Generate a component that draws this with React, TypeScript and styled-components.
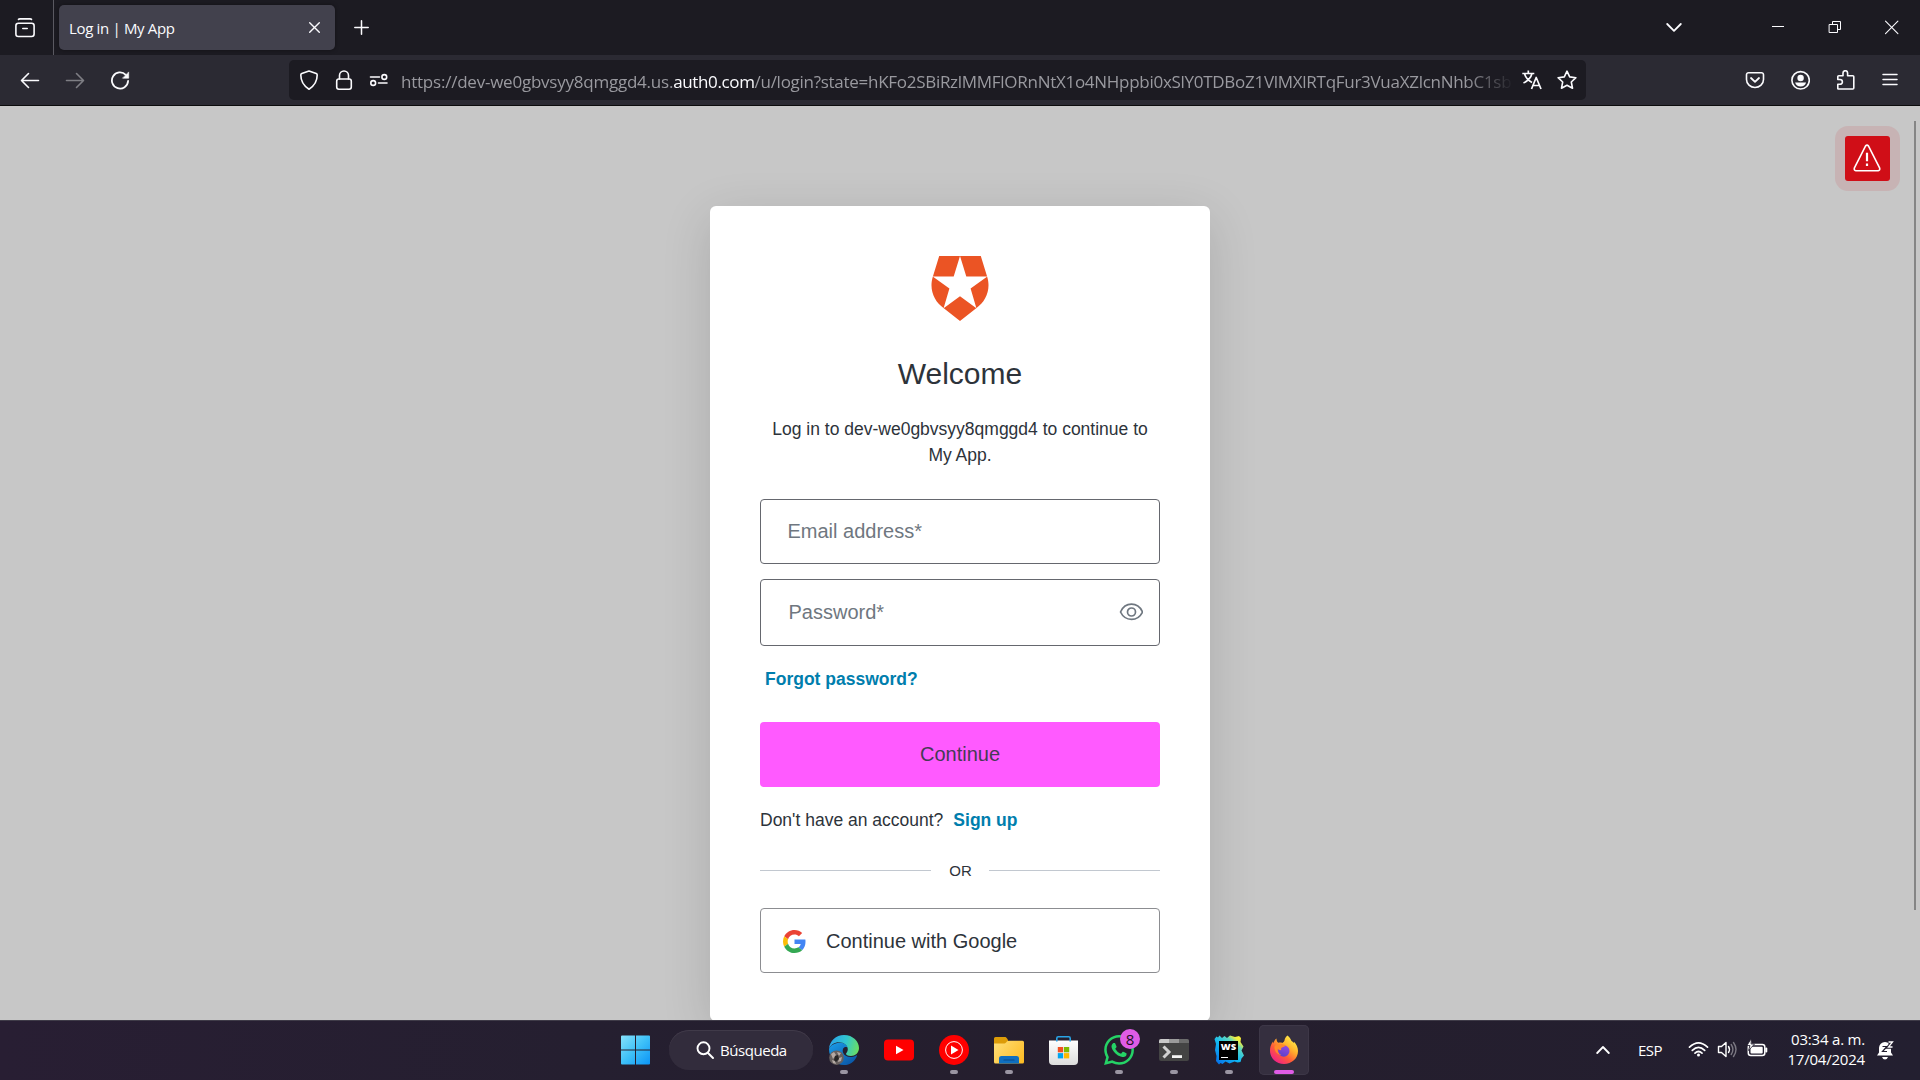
import React from "react";
import styled, { createGlobalStyle } from "styled-components";

const ui = `"Open Sans", "Noto Sans", sans-serif`;
const page = `"Liberation Sans", Arial, sans-serif`;

const GlobalStyle = createGlobalStyle`
  *, *::before, *::after { box-sizing: border-box; }
  html, body { margin: 0; padding: 0; overflow: hidden; }
  svg { display: block; flex: none; }
  button { font: inherit; padding: 0; margin: 0; }
`;

const Screen = styled.div`
  display: flex;
  flex-direction: column;
  width: 1920px;
  height: 1080px;
  overflow: hidden;
  font-family: ${ui};
`;

/* ---------- Browser chrome ---------- */

const TabStrip = styled.header`
  display: flex;
  align-items: center;
  height: 55px;
  background: #1c1b22;
  color: #fbfbfe;
`;

const ViewSlot = styled.div`
  display: flex;
  align-items: center;
  height: 55px;
  width: 54px;
  padding-left: 15px;
  border-right: 1px solid #5a5961;
`;

const Tab = styled.div`
  display: flex;
  align-items: center;
  justify-content: space-between;
  width: 276px;
  height: 45px;
  margin-left: 5px;
  padding: 0 14px 0 10px;
  border-radius: 5px;
  background: #42414d;
  box-shadow: 0 0 4px rgba(0, 0, 0, 0.4);
  font-size: 15px;
  letter-spacing: -0.33px;
  line-height: 20px;
`;

const NewTab = styled.div`
  margin-left: 19px;
`;

const WindowControls = styled.div`
  display: flex;
  align-items: center;
  gap: 41px;
  margin-left: auto;
  padding-right: 20px;
`;

const TabsMenu = styled.div`
  margin-right: 46px;
`;

const Toolbar = styled.nav`
  display: flex;
  align-items: center;
  height: 51px;
  background: #2b2a33;
  border-bottom: 1px solid #0c0c0d;
  color: #fbfbfe;
`;

const NavButtons = styled.div`
  display: flex;
  gap: 25px;
  width: 289px;
  padding-left: 20px;
`;

const Faded = styled.span`
  opacity: 0.4;
`;

const UrlBar = styled.div`
  display: flex;
  align-items: center;
  width: 1297px;
  height: 40px;
  padding-left: 10px;
  border-radius: 5px;
  background: #1c1b22;
`;

const UrlIcons = styled.div`
  display: flex;
  gap: 15px;
  width: 102px;
`;

const UrlText = styled.div`
  width: 1113px;
  overflow: hidden;
  white-space: nowrap;
  font-size: 17px;
  line-height: 24px;
  letter-spacing: -0.23px;
  padding-top: 4px;
  color: #99999f;
  mask-image: linear-gradient(to right, #000 1065px, transparent 1113px);
`;

const Host = styled.span`
  color: #fbfbfe;
  letter-spacing: -0.36px;
`;

const Path = styled.span`
  letter-spacing: -0.28px;
`;

const UrlActions = styled.div`
  display: flex;
  gap: 15px;
  margin-left: 8px;
`;

const ToolbarActions = styled.div`
  display: flex;
  gap: 25px;
  margin-left: auto;
  padding-right: 20px;
`;

/* ---------- Page ---------- */

const Viewport = styled.main`
  position: relative;
  display: flex;
  justify-content: center;
  align-items: flex-start;
  height: 914px;
  padding-top: 100px;
  overflow: hidden;
  background: #c7c7c7;
  font-family: ${page};
`;

const Card = styled.section`
  display: flex;
  flex-direction: column;
  width: 500px;
  height: 815px;
  padding: 50px 50px 0;
  border-radius: 6px;
  background: #fff;
  box-shadow: 0 12px 50px rgba(0, 0, 0, 0.14);
  color: #2d333a;
`;

const Brand = styled.div`
  display: flex;
  justify-content: center;
  height: 65px;
`;

const Title = styled.h1`
  margin: 35px 0 24px;
  font-size: 30px;
  line-height: 36px;
  font-weight: 400;
  text-align: center;
`;

const Intro = styled.p`
  margin: 0 0 31px;
  font-size: 17.5px;
  line-height: 26px;
  text-align: center;
`;

const Field = styled.div<{ $tall?: boolean }>`
  display: flex;
  align-items: center;
  justify-content: space-between;
  height: ${(p) => (p.$tall ? 67 : 65)}px;
  padding: 0 16px 2px ${(p) => (p.$tall ? 27.5 : 26.5)}px;
  margin-bottom: ${(p) => (p.$tall ? 20 : 15)}px;
  border: 1px solid #65676e;
  border-radius: 4px;
  color: #6f7780;
  font-size: 20px;
  line-height: 24px;
`;

const Link = styled.a`
  color: #007ead;
  font-weight: 700;
`;

const ForgotRow = styled.div`
  padding-left: 5px;
  margin-bottom: 30px;
  font-size: 17.5px;
  line-height: 26px;
`;

const Primary = styled.button`
  height: 65px;
  padding-bottom: 2px;
  border: 0;
  border-radius: 4px;
  background: #ff5aff;
  color: #463a55;
  font-size: 20px;
  line-height: 24px;
`;

const SignupRow = styled.div`
  display: flex;
  gap: 10px;
  margin: 20px 0 27px;
  font-size: 17.5px;
  line-height: 26px;
`;

const Divider = styled.div`
  display: flex;
  align-items: center;
  height: 20px;
  margin-bottom: 28px;
  font-size: 15px;
  line-height: 20px;
  text-align: center;
`;

const Rule = styled.span`
  flex: 1;
  height: 1px;
  background: #c2c8d0;
`;

const OrText = styled.span`
  width: 58px;
  padding: 2px 0 0 1px;
`;

const Social = styled.button`
  display: flex;
  align-items: center;
  gap: 20px;
  height: 65px;
  padding-left: 22px;
  border: 1px solid #8c8d91;
  border-radius: 4px;
  background: #fff;
  color: #2d333a;
  font-size: 20px;
  line-height: 24px;
`;

const AlertHalo = styled.div`
  position: absolute;
  top: 20px;
  right: 20px;
  padding: 10px;
  border-radius: 13px;
  background: rgba(208, 14, 23, 0.1);
`;

const AlertBadge = styled.div`
  display: grid;
  place-items: center;
  width: 45px;
  height: 45px;
  padding: 0 1px 1px 0;
  border-radius: 3px;
  background: #d00e17;
`;

const Scrollbar = styled.div`
  position: absolute;
  top: 15px;
  right: 4px;
  width: 2px;
  height: 789px;
  background: #858585;
`;

/* ---------- Taskbar ---------- */

const Taskbar = styled.footer`
  display: flex;
  align-items: center;
  height: 60px;
  padding: 0 0 1px 610px;
  border-top: 1px solid #3f3b48;
  background: linear-gradient(90deg, #281e33 0%, #251f30 30%, #251e2d 60%, #231f30 100%);
  color: #fff;
`;

const AppSlot = styled.div<{ $active?: boolean }>`
  position: relative;
  display: grid;
  place-items: center;
  width: 50px;
  height: 50px;
  margin-right: 5px;
  border-radius: 5px;
  background: ${(p) => (p.$active ? "#352f3f" : "transparent")};
  box-shadow: ${(p) => (p.$active ? "inset 0 0 0 1px #3d3747" : "none")};
`;

const Indicator = styled.span<{ $active?: boolean }>`
  position: absolute;
  bottom: 1px;
  left: ${(p) => (p.$active ? 15 : 21)}px;
  width: ${(p) => (p.$active ? 20 : 8)}px;
  height: 4px;
  border-radius: 2px;
  background: ${(p) => (p.$active ? "#df5ce6" : "#9a95a2")};
`;

const Badge = styled.span`
  position: absolute;
  top: 4px;
  right: 4px;
  width: 20px;
  height: 20px;
  border-radius: 50%;
  background: #df5ce6;
  color: #1b1020;
  font-size: 15px;
  line-height: 20px;
  text-align: center;
`;

const Search = styled.div`
  display: flex;
  align-items: center;
  gap: 6px;
  width: 144px;
  height: 40px;
  margin: 0 6px 0 4px;
  padding-left: 27px;
  border-radius: 20px;
  background: #322c3c;
  box-shadow: inset 0 1px 0 #403a49;
  font-size: 15px;
  letter-spacing: -0.45px;
`;

const Tray = styled.div`
  display: flex;
  align-items: center;
  margin-left: auto;
  padding-right: 25px;
  font-size: 15px;
`;

const Language = styled.span`
  width: 26px;
  margin: 0 24px 0 28px;
  letter-spacing: -0.5px;
`;

const StatusIcons = styled.div`
  display: flex;
  gap: 8px;
`;

const Clock = styled.div`
  width: 90px;
  margin: 0 11px 0 7px;
  padding-bottom: 2px;
  font-size: 15px;
  line-height: 20px;
  letter-spacing: -0.2px;
  text-align: right;
  white-space: nowrap;
`;

/* ---------- Icons ---------- */

type IconProps = { size?: number; sw?: number; children: React.ReactNode };

const Icon = ({ size = 20, sw = 1.6, children }: IconProps) => (
  <svg
    width={size}
    height={size}
    viewBox={`0 0 ${size} ${size}`}
    fill="none"
    stroke="currentColor"
    strokeWidth={sw}
    strokeLinecap="round"
    strokeLinejoin="round"
  >
    {children}
  </svg>
);

const Auth0Logo = () => (
  <svg width="58" height="65" viewBox="0 0 58 65">
    <path
      fill="#eb5424"
      d="M8.2 0H49.8L56.1 20.4C60.2 33.5 55 45.5 45.2 52.3L29 65 12.8 52.3C3 45.5 -2.2 33.5 1.9 20.4Z"
    />
    <path
      fill="#fff"
      d="M29 0 35.3 20.4H56.3L39.6 32.4 45.4 52.3 29 40.3 12.6 52.3 18.4 32.4 1.7 20.4H22.7Z"
    />
  </svg>
);

const GoogleLogo = () => (
  <svg width="23" height="24" viewBox="0 -2 48 50">
    <path fill="#EA4335" d="M24 9.5c3.54 0 6.71 1.22 9.21 3.6l6.85-6.85C35.9 2.38 30.47 0 24 0 14.62 0 6.51 5.38 2.56 13.22l7.98 6.19C12.43 13.72 17.74 9.5 24 9.5z" />
    <path fill="#4285F4" d="M46.98 24.55c0-1.57-.15-3.09-.38-4.55H24v9.02h12.94c-.58 2.96-2.26 5.48-4.78 7.18l7.73 6c4.51-4.18 7.09-10.36 7.09-17.65z" />
    <path fill="#FBBC05" d="M10.53 28.59c-.48-1.45-.76-2.99-.76-4.59s.27-3.14.76-4.59l-7.98-6.19C.92 16.46 0 20.12 0 24c0 3.88.92 7.54 2.56 10.78l7.97-6.19z" />
    <path fill="#34A853" d="M24 48c6.48 0 11.93-2.13 15.89-5.81l-7.73-6c-2.15 1.45-4.92 2.3-8.16 2.3-6.26 0-11.57-4.22-13.47-9.91l-7.98 6.19C6.51 42.62 14.62 48 24 48z" />
  </svg>
);

const WindowsLogo = () => (
  <svg width="30" height="30" viewBox="0 0 30 30">
    <defs>
      <linearGradient id="win" x1="0" y1="0" x2="30" y2="30" gradientUnits="userSpaceOnUse">
        <stop offset="0" stopColor="#8be4fc" />
        <stop offset="0.5" stopColor="#3fc1f8" />
        <stop offset="1" stopColor="#0a93f5" />
      </linearGradient>
    </defs>
    <path fill="url(#win)" d="M2 .5H15v14H1v-13a1 1 0 0 1 1-1zM16 .5h13a1 1 0 0 1 1 1v13H16zM1 15.500H15v14H2a1 1 0 0 1-1-1zM16 15.500h14v13a1 1 0 0 1-1 1H16z" />
  </svg>
);

const EdgeLogo = () => (
  <svg width="30" height="30" viewBox="0 0 30 30">
    <defs>
      <linearGradient id="edgeTop" x1="1" y1="8" x2="30" y2="16" gradientUnits="userSpaceOnUse">
        <stop offset="0" stopColor="#2aa5e8" />
        <stop offset="0.5" stopColor="#31c6cf" />
        <stop offset="1" stopColor="#6fe05a" />
      </linearGradient>
      <linearGradient id="edgeLow" x1="5" y1="10" x2="20" y2="30" gradientUnits="userSpaceOnUse">
        <stop offset="0" stopColor="#1893e0" />
        <stop offset="1" stopColor="#0b59a8" />
      </linearGradient>
    </defs>
    <path fill="url(#edgeLow)" d="M0 14C2 7 17 5 18.500 12.500 15 11 13 14 14 17.500c1.500 4.500 8 6 13 3 .8-.4 1.200.1.800.9C25.500 26.500 21 30 15 30 6.500 30 0 23 0 14z" />
    <path fill="url(#edgeTop)" d="M0 14C.5 6 7 0 15 0c9 0 15 6.500 15 13 0 5-4 8-8 8-3.500 0-5-1.200-5-2.200 0-.9 1.800-1.800 1.800-4.600 0-3.800-3.800-7-8.800-7C5.500 7.200 1.500 9.700 0 14z" />
    <circle cx="7.500" cy="22.700" r="7.300" fill="#67605e" />
    <path fill="#b5aaa4" d="M2 19l3-2 2 3-3 4zM8 17l4 1-2 3zM10 23l3-1-1 4-3 1zM3 25l3 1 1 3-3-1z" />
    <path fill="#282626" d="M6 21l3-1 1 4-3 3-2-2z" />
  </svg>
);

const YouTubeLogo = () => (
  <svg width="30" height="30" viewBox="0 0 30 30">
    <rect y="4.500" width="30" height="21" rx="4" fill="#f00" />
    <path fill="#fff" d="M12 10.800 19.500 15 12 19.200z" />
  </svg>
);

const YouTubeMusicLogo = () => (
  <svg width="30" height="30" viewBox="0 0 30 30">
    <circle cx="15" cy="15" r="15" fill="#f00" />
    <circle cx="15" cy="15" r="8.400" fill="none" stroke="#fff" strokeWidth="1" />
    <path fill="#fff" d="M12 10.500 19.500 15 12 19.500z" />
  </svg>
);

const ExplorerLogo = () => (
  <svg width="30" height="30" viewBox="0 0 30 30">
    <defs>
      <linearGradient id="folder" x1="0" y1="5" x2="30" y2="28" gradientUnits="userSpaceOnUse">
        <stop offset="0" stopColor="#ffe07a" />
        <stop offset="1" stopColor="#fdbb22" />
      </linearGradient>
    </defs>
    <path fill="#dd9c08" d="M0 12V3.500A1.500 1.500 0 0 1 1.500 2h9.200c1 0 1.600.5 2.200 1.200L14 5v7z" />
    <path fill="url(#folder)" d="M0 8.500h9.500c1.500 0 2-.5 3-1.500s1.500-1.200 2.700-1.200h13.300A1.500 1.500 0 0 1 30 7.300V27a1.500 1.500 0 0 1-1.500 1.500h-27A1.500 1.500 0 0 1 0 27z" />
    <path fill="#0f6fc0" d="M5 28.500V23.500c0-1.700 1-2.500 2.500-2.500h15c1.500 0 2.500.8 2.500 2.500v5z" />
    <path stroke="#0a4a8a" strokeWidth="1.200" strokeLinecap="round" d="M10 25h10" />
  </svg>
);

const StoreLogo = () => (
  <svg width="30" height="30" viewBox="0 0 30 30">
    <defs>
      <linearGradient id="bag" x1="0" y1="5" x2="0" y2="30" gradientUnits="userSpaceOnUse">
        <stop offset="0" stopColor="#fff" />
        <stop offset="1" stopColor="#dcdcdc" />
      </linearGradient>
    </defs>
    <path fill="url(#bag)" d="M0 5.500h29V26a4 4 0 0 1-4 4H4a4 4 0 0 1-4-4z" />
    <path fill="none" stroke="#2aa4e6" strokeWidth="1.600" d="M7.800 6.500V3.300A1.500 1.500 0 0 1 9.300 1.800h10.400a1.500 1.500 0 0 1 1.500 1.500v3.200" />
    <path fill="#f25022" d="M8.800 12h5.300v5.300H8.800z" />
    <path fill="#7fba00" d="M14.900 12h5.300v5.300h-5.300z" />
    <path fill="#00a4ef" d="M8.800 18.100h5.300v5.300H8.800z" />
    <path fill="#ffb900" d="M14.900 18.100h5.300v5.300h-5.300z" />
  </svg>
);

const WhatsAppLogo = () => (
  <svg width="30" height="30" viewBox="0 0 24 24">
    <path
      fill="#25d366"
      d="M17.472 14.382c-.297-.149-1.758-.867-2.030-.967-.273-.099-.471-.148-.670.150-.197.297-.767.966-.940 1.164-.173.199-.347.223-.644.075-.297-.150-1.255-.463-2.390-1.475-.883-.788-1.480-1.761-1.653-2.059-.173-.297-.018-.458.130-.606.134-.133.298-.347.446-.520.149-.174.198-.298.298-.497.099-.198.050-.371-.025-.520-.075-.149-.669-1.612-.916-2.207-.242-.579-.487-.500-.669-.510-.173-.008-.371-.010-.570-.010-.198 0-.520.074-.792.372-.272.297-1.040 1.016-1.040 2.479 0 1.462 1.065 2.875 1.213 3.074.149.198 2.096 3.200 5.077 4.487.709.306 1.262.489 1.694.625.712.227 1.360.195 1.871.118.571-.085 1.758-.719 2.006-1.413.248-.694.248-1.289.173-1.413-.074-.124-.272-.198-.570-.347m-5.421 7.403h-.004a9.870 9.870 0 01-5.031-1.378l-.361-.214-3.741.982.998-3.648-.235-.374a9.860 9.860 0 01-1.510-5.260c.001-5.450 4.436-9.884 9.888-9.884 2.640 0 5.122 1.030 6.988 2.898a9.825 9.825 0 012.893 6.994c-.003 5.450-4.437 9.884-9.885 9.884m8.413-18.297A11.815 11.815 0 0012.050 0C5.495 0 .160 5.335.157 11.892c0 2.096.547 4.142 1.588 5.945L.057 24l6.305-1.654a11.882 11.882 0 005.683 1.448h.005c6.554 0 11.890-5.335 11.893-11.893a11.821 11.821 0 00-3.480-8.413z"
    />
  </svg>
);

const TerminalLogo = () => (
  <svg width="30" height="30" viewBox="0 0 30 30">
    <rect y="4" width="30" height="22" rx="2" fill="#444" />
    <path fill="#c9c9c9" d="M2 4h8v4H0V6a2 2 0 0 1 2-2z" />
    <path fill="#9b9b9b" d="M10 4h10v4H10z" />
    <path fill="#6b6b6b" d="M20 4h8a2 2 0 0 1 2 2v2H20z" />
    <path fill="none" stroke="#d0d0d0" strokeWidth="3" d="M4.500 11.500 10 17l-5.500 5.500" />
    <path fill="#f4f4f4" d="M13 20.200h10v2.800H13z" />
  </svg>
);

const WsTile = styled.div`
  position: absolute;
  left: 15px;
  top: 16px;
  width: 19px;
  height: 19px;
  background: #000;
  color: #fff;
  font: 800 9.5px/12px "Open Sans", sans-serif;
  text-align: center;
  &::after {
    content: "";
    position: absolute;
    left: 2px;
    bottom: 2px;
    width: 7px;
    height: 1px;
    background: #fff;
  }
`;

const WebStormShape = () => (
  <svg width="30" height="30" viewBox="0 0 30 30">
    <defs>
      <linearGradient id="ws" x1="4" y1="28" x2="26" y2="2" gradientUnits="userSpaceOnUse">
        <stop offset="0" stopColor="#0773e8" />
        <stop offset="0.450" stopColor="#10b9f4" />
        <stop offset="0.750" stopColor="#5fd8c0" />
        <stop offset="0.900" stopColor="#f5ef3c" />
      </linearGradient>
    </defs>
    <path fill="url(#ws)" d="M.5 4 2.500 1.500 4 2.500 5.500.5 8 3l2.500-2L13 3l3-2.500 5 1.500 4-1 2 2-.5 4 3 4.500-2 4 2.500 5-2.500 3-1 3.500-3 .5-3-1-5 2-4-2-3 2.500-2-1-1.500 1.500L2 26l.5-5-1.500-6 1-6z" />
  </svg>
);

const FirefoxLogo = () => (
  <svg width="30" height="30" viewBox="0 0 30 30">
    <defs>
      <linearGradient id="fx" x1="25" y1="3" x2="6" y2="27" gradientUnits="userSpaceOnUse">
        <stop offset="0" stopColor="#fff04a" />
        <stop offset="0.350" stopColor="#ffb02c" />
        <stop offset="0.650" stopColor="#ff5a38" />
        <stop offset="1" stopColor="#f0208a" />
      </linearGradient>
      <linearGradient id="fxCore" x1="18" y1="8" x2="13" y2="22" gradientUnits="userSpaceOnUse">
        <stop offset="0" stopColor="#a04be8" />
        <stop offset="1" stopColor="#5a41c8" />
      </linearGradient>
    </defs>
    <path fill="url(#fx)" d="M18.500.5c2 1.500 3.200 3.600 4 5.500.8.300 1.600 1 2.200 2l.3-1.200c2.500 2.500 4 6 4 9.200C29 23.500 22.700 29 15 29S1 23.500 1 15.500C1 12 2 9 4 6.500l.5 2C5 6 6 4.500 7.500 3.500c0 2 .5 3.300 1.800 4.300 1.200-.3 2.700-.3 4 .1 1.500-.8 2-1.600 2.200-2.400.3-2 1.200-3.700 3-5z" />
    <circle cx="14.800" cy="16" r="5.700" fill="url(#fxCore)" />
    <path fill="#ff8a2b" d="M5.500 11.500c2-2.500 5-3.500 8-2.300 1 .4 2 .8 3 .8-.5 1.600-2 2-3.500 2.500-1 .4-1 1.500-.8 2.500-1.500.5-3-.5-3.700-1.500-.2 3 1 5.500 4 6.500-4 0-7.500-4-7-8.500z" />
  </svg>
);

const taskApps = [
  { name: "edge", icon: <EdgeLogo />, running: true },
  { name: "youtube", icon: <YouTubeLogo /> },
  { name: "ytmusic", icon: <YouTubeMusicLogo />, running: true },
  { name: "explorer", icon: <ExplorerLogo />, running: true },
  { name: "store", icon: <StoreLogo /> },
  { name: "whatsapp", icon: <WhatsAppLogo />, running: true, badge: "8" },
  { name: "terminal", icon: <TerminalLogo />, running: true },
  { name: "webstorm", icon: <><WebStormShape /><WsTile>WS</WsTile></>, running: true },
  { name: "firefox", icon: <FirefoxLogo />, running: true, active: true },
];

const BrowserChrome = () => (
  <>
    <TabStrip>
      <ViewSlot>
        <Icon>
          <path d="M3.500 1.400Q4 .9 5 .9h10q1 0 1.500.5" />
          <rect x="0.900" y="5.300" width="18.200" height="13.200" rx="2.500" />
          <path d="M7.800 10.500h4.400" />
        </Icon>
      </ViewSlot>
      <Tab>
        <span>Log in | My App</span>
        <Icon size={13} sw={1.400}><path d="M1.700 1.700l9.600 9.600M11.300 1.700l-9.600 9.600" /></Icon>
      </Tab>
      <NewTab>
        <Icon size={15} sw={1.500}><path d="M7.500.8v13.400M.8 7.500h13.400" /></Icon>
      </NewTab>
      <WindowControls>
        <TabsMenu>
          <Icon size={18} sw={1.800}><path d="M2.200 5l6.800 6.800L15.800 5" /></Icon>
        </TabsMenu>
        <Icon size={16} sw={1}><path strokeLinecap="butt" d="M2 6.500h12" /></Icon>
        <Icon size={16} sw={1}>
          <path strokeLinejoin="miter" d="M2.500 4.500h8v8h-8zM5.500 4.500v-3h8v8h-3" />
        </Icon>
        <Icon size={16} sw={1.100}><path d="M1.500 1.200l12.400 12.400M13.900 1.200L1.500 13.600" /></Icon>
      </WindowControls>
    </TabStrip>
    <Toolbar>
      <NavButtons>
        <Icon><path d="M18.500 10.500H1.800M8.500 3.500l-7 7 7 7" /></Icon>
        <Faded><Icon><path d="M1.500 10.500h16.700M11.500 3.500l7 7-7 7" /></Icon></Faded>
        <Icon>
          <path strokeWidth="1.800" d="M18.100 11A8.100 8.100 0 1 1 15.800 4.800" />
          <path fill="currentColor" strokeWidth="0.600" d="M18.700 2.300v5.900h-5.900z" />
        </Icon>
      </NavButtons>
      <UrlBar>
        <UrlIcons>
          <Icon><path d="M10 1 17.200 3.600Q18.200 4 18.200 5 18.200 14 10 19.200 1.800 14 1.800 5 1.800 4 2.800 3.600z" /></Icon>
          <Icon>
            <rect x="2.700" y="9" width="14.600" height="10.200" rx="2.200" />
            <path d="M5.500 9V5.500a4.500 4.500 0 0 1 9 0V9" />
          </Icon>
          <Icon>
            <path d="M1.500 7h9M9.500 13h8.500" />
            <circle cx="15.300" cy="7" r="2.400" />
            <circle cx="4.200" cy="13" r="2.400" />
          </Icon>
        </UrlIcons>
        <UrlText>
          https://dev-we0gbvsyy8qmggd4.us.<Host>auth0.com</Host>
          <Path>/u/login?state=hKFo2SBiRzlMMFlORnNtX1o4NHppbi0xSlY0TDBoZ1VlMXlRTqFur3VuaXZlcnNhbC1sb</Path>
        </UrlText>
        <UrlActions>
          <Icon>
            <path strokeWidth="1.700" strokeLinecap="butt" d="M.3 3.500h12M6.300.5v3M2.500 3.500Q4 9.500 10 12.500M10 3.500Q8.500 9.500 1.500 13M9.500 19l4.700-11.500L19 19M11 15.500h6.500" />
          </Icon>
          <Icon>
            <path d="M10 1.200l2.700 5.700 6.200.8-4.600 4.300 1.200 6.200-5.500-3-5.500 3 1.200-6.200L1.100 7.700l6.200-.8z" />
          </Icon>
        </UrlActions>
      </UrlBar>
      <ToolbarActions>
        <Icon>
          <path d="M3.500 2.700h13a2 2 0 0 1 2 2v4.800a8.500 8 0 0 1-17 0V4.700a2 2 0 0 1 2-2z" />
          <path strokeWidth="1.800" d="M6 8l4 3.800L14 8" />
        </Icon>
        <Icon>
          <circle cx="10.600" cy="10.300" r="8.700" />
          <circle cx="10.600" cy="8" r="3.200" fill="currentColor" stroke="none" />
          <path fill="currentColor" stroke="none" d="M5.100 12.500h11q-1.200 4-5.500 4t-5.500-4z" />
        </Icon>
        <Icon>
          <path d="M2.800 18.500V14.300h2.200a2.200 2.200 0 0 0 0-4.800H2.800V6.800A1 1 0 0 1 3.800 5.800h4.200V3a2.300 2.300 0 0 1 4.600 0v2.800h5.200a1 1 0 0 1 1 1V18a1 1 0 0 1-1 1H3.800a1 1 0 0 1-1-.5z" />
        </Icon>
        <Icon sw={1.500}><path d="M3 4.500h14M3 9.500h14M3 14.500h14" /></Icon>
      </ToolbarActions>
    </Toolbar>
  </>
);

const LoginCard = () => (
  <Card>
    <Brand><Auth0Logo /></Brand>
    <Title>Welcome</Title>
    <Intro>Log in to dev-we0gbvsyy8qmggd4 to continue to My App.</Intro>
    <Field>Email address*</Field>
    <Field $tall>
      Password*
      <svg width="24" height="18" viewBox="-0.5 0 24 18" fill="none" stroke="currentColor" strokeWidth="1.700">
        <path strokeLinejoin="round" d="M1 9Q4.500 1.200 12 1.200T23 9Q19.500 16.300 12 16.300T1 9z" />
        <circle cx="12" cy="9" r="4" />
      </svg>
    </Field>
    <ForgotRow><Link>Forgot password?</Link></ForgotRow>
    <Primary>Continue</Primary>
    <SignupRow>
      <span>Don't have an account?</span>
      <Link>Sign up</Link>
    </SignupRow>
    <Divider><Rule /><OrText>OR</OrText><Rule /></Divider>
    <Social><GoogleLogo />Continue with Google</Social>
  </Card>
);

const DesktopTaskbar = () => (
  <Taskbar>
    <AppSlot><WindowsLogo /></AppSlot>
    <Search>
      <Icon size={18} sw={1.900}><circle cx="7.500" cy="7.300" r="6" /><path d="M12 12l5 5" /></Icon>
      Búsqueda
    </Search>
    {taskApps.map((app) => (
      <AppSlot key={app.name} $active={app.active}>
        {app.icon}
        {app.badge && <Badge>{app.badge}</Badge>}
        {app.running && <Indicator $active={app.active} />}
      </AppSlot>
    ))}
    <Tray>
      <Icon size={14} sw={1.800}><path d="M1.200 10l5.800-6 5.800 6" /></Icon>
      <Language>ESP</Language>
      <StatusIcons>
        <Icon size={21} sw={1.700}>
          <path d="M1.500 8.200q9-8.500 18 0M4.300 11.300q6.200-6 12.400 0M7 14.200q3.500-3.400 7 0" />
          <circle cx="10.500" cy="16" r="1.500" fill="currentColor" stroke="none" />
        </Icon>
        <Icon size={21} sw={1.400}>
          <path d="M1.500 7.500h3l4.500-4v14l-4.500-4h-3zM11.500 7.500q2 3 0 6" />
          <path opacity="0.400" d="M14.200 5.500q3.400 5 0 10M16.500 3.500q5 7 0 14" />
        </Icon>
        <Icon size={22} sw={1.500}>
          <rect x="2.300" y="5.500" width="16.500" height="11" rx="2.500" />
          <rect x="4.500" y="7.700" width="12.200" height="6.700" rx="1" fill="currentColor" stroke="none" />
          <path strokeWidth="2" d="M20.300 9.500v3" />
          <path fill="currentColor" stroke="#231f30" strokeWidth="0.800" d="M5 0 1 6.500h3L2.500 11.500l6-6.500H5.500z" />
        </Icon>
      </StatusIcons>
      <Clock>03:34 a. m.<br />17/04/2024</Clock>
      <svg width="19" height="20" viewBox="0 0 19 20" fill="none">
        <path fill="#fff" d="M1 15.500h16l-2-3V8a6 6 0 0 0-12 0v4.500zM6 17h6q-1 2.500-3 2.500T6 17z" />
        <path stroke="#231f30" strokeWidth="1.200" d="M6.500 6.500h4.500l-4.500 5h4.500" />
        <path stroke="#231f30" strokeWidth="3.500" d="M12.500 2h4l-4 5h4" />
        <path stroke="#fff" strokeWidth="1.300" d="M12.500 2h4l-4 5h4" />
      </svg>
    </Tray>
  </Taskbar>
);

export default function App() {
  return (
    <>
      <GlobalStyle />
      <Screen>
        <BrowserChrome />
        <Viewport>
          <LoginCard />
          <AlertHalo>
            <AlertBadge>
              <svg width="28" height="28" viewBox="0 0 28 28" fill="none" stroke="#fff" strokeWidth="1.600" strokeLinecap="round" strokeLinejoin="round">
                <path d="M12.600 1.900Q14 .4 15.400 1.900L26.700 24.200Q27.200 26.300 25.200 26.700H2.800Q.8 26.300 1.300 24.200z" />
                <path strokeWidth="2.200" strokeLinecap="butt" d="M14 8.700v8.600M14 19.500v2.400" />
              </svg>
            </AlertBadge>
          </AlertHalo>
          <Scrollbar />
        </Viewport>
        <DesktopTaskbar />
      </Screen>
    </>
  );
}
